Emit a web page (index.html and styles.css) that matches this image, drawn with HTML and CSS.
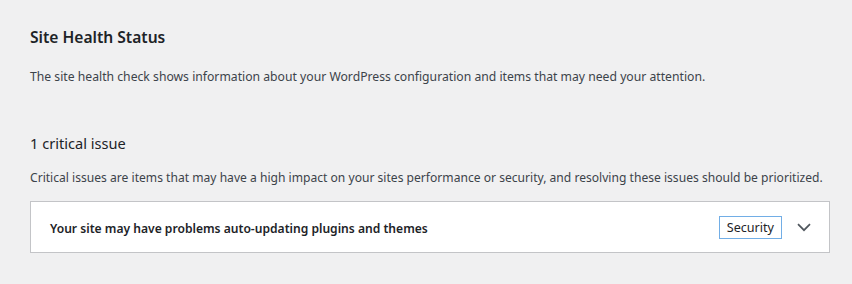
FILE: index.html
```html
<!DOCTYPE html>
<html lang="en">
<head>
<meta charset="utf-8">
<title>Site Health Status</title>
<link rel="stylesheet" href="styles.css">
</head>
<body>
<main class="health">
  <h2 class="title">Site Health Status</h2>
  <p class="intro">The site health check shows information about your WordPress configuration and items that may need your attention.</p>
  <h3 class="count">1 critical issue</h3>
  <p class="desc">Critical issues are items that may have a high impact on your sites performance or security, and resolving these issues should be prioritized.</p>
  <div class="issue">
    <span class="issue-title">Your site may have problems auto-updating plugins and themes</span>
    <span class="badge">Security</span>
    <svg class="chevron" width="14" height="9" viewBox="0 0 14 9" aria-hidden="true"><path d="M1 1.2 L7 7.2 L13 1.2" fill="none" stroke="#50575e" stroke-width="1.7"/></svg>
  </div>
</main>
</body>
</html>
```
FILE: styles.css
```css
html, body {
  margin: 0;
  padding: 0;
  background: #f0f0f1;
}
body {
  font-family: "Noto Sans", "Open Sans", sans-serif;
  color: #3c434a;
}
.health {
  padding: 25px 22px 0 30px;
}
.title {
  margin: 0;
  font-size: 15.6px;
  line-height: 24px;
  font-weight: 600;
  color: #1d2327;
}
.intro {
  margin: 18px 0 0;
  font-size: 12.2px;
  line-height: 20px;
}
.count {
  margin: 44px 0 0;
  font-size: 14.6px;
  line-height: 24px;
  font-weight: 400;
  color: #1d2327;
}
.desc {
  margin: 13px 0 0;
  font-size: 12.1px;
  line-height: 20px;
  white-space: nowrap;
}
.issue {
  margin-top: 13px;
  height: 50px;
  background: #fff;
  border: 1px solid #c3c4c7;
  display: flex;
  align-items: center;
  padding: 0 18px 0 19px;
}
.issue-title {
  flex: 1;
  padding-top: 3px;
  font-size: 12.1px;
  line-height: 20px;
  font-weight: 600;
  color: #1d2327;
}
.badge {
  box-sizing: border-box;
  height: 23px;
  padding: 0 7px;
  border: 1px solid #72aee6;
  font-size: 12.6px;
  line-height: 21px;
  color: #1d2327;
}
.chevron {
  margin-left: 15px;
}
```
